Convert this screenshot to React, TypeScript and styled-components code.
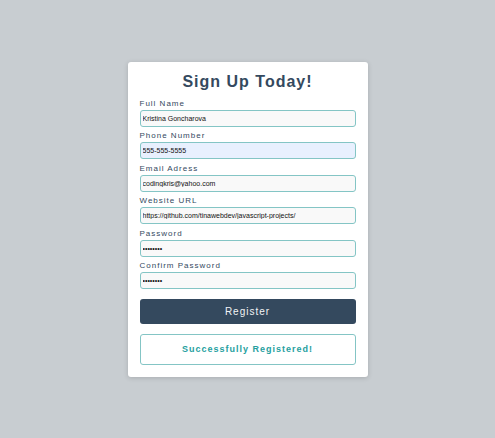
import React, { useState } from "react";
import styled, { createGlobalStyle } from "styled-components";

const GlobalStyle = createGlobalStyle`
  *, *::before, *::after { box-sizing: border-box; }
  body {
    margin: 0;
    background: #c8cdd1;
    color: #34495e;
    font-family: "Liberation Sans", Arial, sans-serif;
  }
`;

const Page = styled.main`
  min-height: 100vh;
  display: flex;
  align-items: center;
  justify-content: center;
`;

const Card = styled.section`
  width: 100%;
  max-width: 240px;
  padding: 9px 12px 12px;
  background: #fff;
  border-radius: 3px;
  box-shadow: 0 1px 5px rgba(0, 0, 0, 0.16);
`;

const Title = styled.h1`
  margin: 0 0 5px;
  font-size: 16px;
  line-height: 22px;
  letter-spacing: 1px;
  text-align: center;
`;

const Form = styled.form`
  display: flex;
  flex-direction: column;
`;

const Fields = styled.div`
  display: flex;
  flex-direction: column;
  justify-content: space-between;
  min-height: 192px;
`;

const Field = styled.div`
  display: flex;
  flex-direction: column;
`;

const Label = styled.label`
  font-size: 8px;
  line-height: 12px;
  letter-spacing: 1px;
`;

const Input = styled.input<{ $filled?: boolean }>`
  width: 100%;
  height: 17px;
  padding: 0 2px;
  border: 1px solid #84c5c5;
  border-radius: 3px;
  background: ${(p) => (p.$filled ? "#e8f0fe" : "#f9f9f9")};
  color: #111;
  font-family: inherit;
  font-size: 7px;
  line-height: 15px;
`;

const Button = styled.button`
  height: 25px;
  margin-top: 9px;
  border: 0;
  border-radius: 3px;
  background: #34495e;
  color: #f2f4f5;
  font-family: inherit;
  font-size: 10px;
  letter-spacing: 1px;
  cursor: pointer;
`;

const Message = styled.div`
  margin-top: 10px;
  padding: 8px;
  border: 1px solid #84c5c5;
  border-radius: 3px;
  color: #26a0a0;
  font-size: 9px;
  font-weight: 700;
  line-height: 13px;
  letter-spacing: 1px;
  text-align: center;
`;

const fields = [
  { id: "name", label: "Full Name", type: "text", value: "Kristina Goncharova" },
  { id: "phone", label: "Phone Number", type: "tel", value: "555-555-5555", filled: true },
  { id: "email", label: "Email Adress", type: "email", value: "codingkris@yahoo.com" },
  { id: "website", label: "Website URL", type: "url", value: "https://github.com/tinawebdev/javascript-projects/" },
  { id: "password", label: "Password", type: "password", value: "password" },
  { id: "confirm", label: "Confirm Password", type: "password", value: "password" },
];

export default function App() {
  const [registered, setRegistered] = useState(true);
  return (
    <>
      <GlobalStyle />
      <Page>
        <Card>
          <Title>Sign Up Today!</Title>
          <Form
            onSubmit={(e) => {
              e.preventDefault();
              setRegistered(true);
            }}
            onChange={() => setRegistered(false)}
          >
            <Fields>
              {fields.map((f) => (
                <Field key={f.id}>
                  <Label htmlFor={f.id}>{f.label}</Label>
                  <Input id={f.id} type={f.type} defaultValue={f.value} $filled={f.filled} />
                </Field>
              ))}
            </Fields>
            <Button type="submit">Register</Button>
          </Form>
          {registered && <Message role="status">Successfully Registered!</Message>}
        </Card>
      </Page>
    </>
  );
}
